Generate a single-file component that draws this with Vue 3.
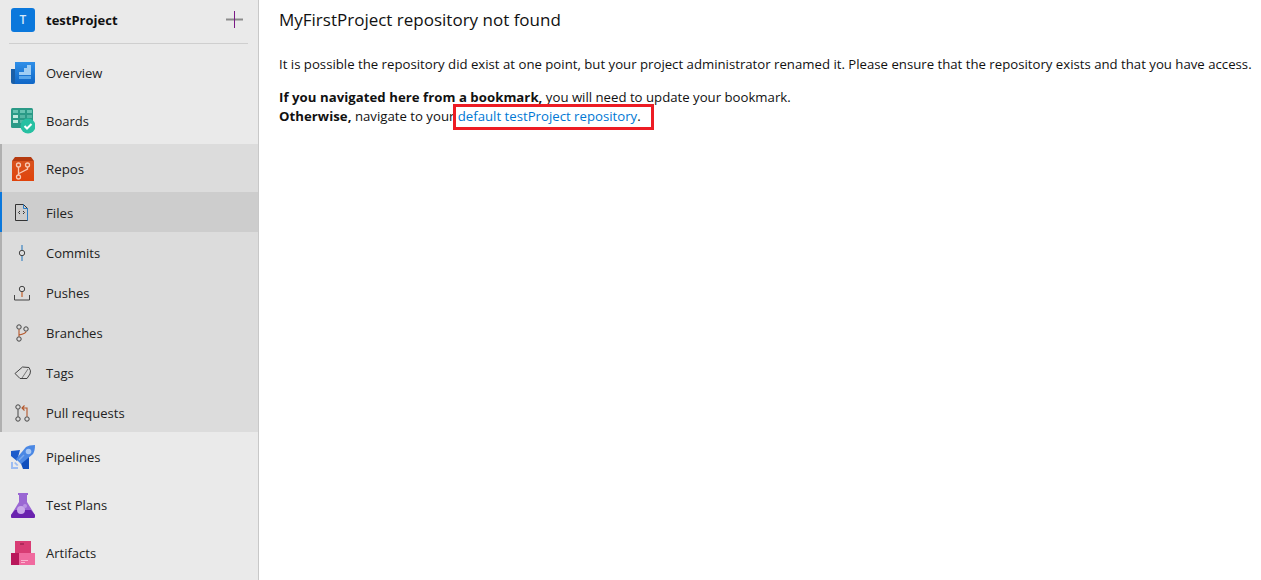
<template>
  <div class="page">
    <aside class="sidebar">
      <div class="project">
        <span class="project__avatar">T</span>
        <span class="project__name">testProject</span>
        <svg class="project__add" width="17" height="17" viewBox="0 0 17 17">
          <path d="M0 8.500h17" stroke="#8c8c8c" stroke-width="2" />
          <path d="M8.500 0v17" stroke="#7a1a86" stroke-width="1" />
        </svg>
      </div>

      <nav class="nav">
        <a class="nav__item">
          <svg class="nav__icon" width="24" height="24" viewBox="0 0 24 24">
            <defs>
              <linearGradient id="overviewFill" x1="0" y1="0" x2="0" y2="1">
                <stop offset="0" stop-color="#2f8fe8" />
                <stop offset="1" stop-color="#0f66c6" />
              </linearGradient>
            </defs>
            <path d="M0 8h5v15H2a2 2 0 0 1-2-2z" fill="#1a5fa8" />
            <path d="M4 1h20v20a2 2 0 0 1-2 2H4z" fill="url(#overviewFill)" />
            <path d="M13 11V7h3V4h4v10H8v-3z" fill="#9fcdf3" />
            <path d="M8 15h12v3H8z" fill="#59a6ea" />
          </svg>
          <span>Overview</span>
        </a>
        <a class="nav__item">
          <svg class="nav__icon" width="24" height="26" viewBox="0 0 24 26">
            <rect x="0" y="0" width="22" height="20" rx="1.500" fill="#2b9a87" />
            <path d="M2 2h5v3H2zM9 2h5v3H9zM16 2h5v3h-5z" fill="#67c4b2" />
            <path d="M2 7h5v3H2zM2 12h5v3H2z" fill="#c4eadf" />
            <path d="M9 7h5v3H9zM16 7h5v3h-5zM9 12h5v3H9z" fill="#54b6a3" />
            <circle cx="17" cy="18" r="7.500" fill="#27c0a2" />
            <path d="M13.500 18l2.500 2.500 4.500-4.500" fill="none" stroke="#fff" stroke-width="2" />
          </svg>
          <span>Boards</span>
        </a>

        <div class="repos">
          <a class="nav__item nav__item--repos">
            <svg class="nav__icon" width="22" height="24" viewBox="0 0 22 24">
              <defs>
                <linearGradient id="reposFill" x1="0" y1="0" x2="0" y2="1">
                  <stop offset="0" stop-color="#d9531e" />
                  <stop offset="1" stop-color="#e0430b" />
                </linearGradient>
              </defs>
              <path d="M0 4h22v20H0z" fill="url(#reposFill)" />
              <path d="M3 0h16l3 4H0z" fill="#b53a0f" />
              <g fill="none" stroke="#f8c9b3" stroke-width="1.300">
                <circle cx="6.500" cy="8" r="2" />
                <circle cx="15.500" cy="8" r="2" />
                <circle cx="6.500" cy="20" r="2" />
                <path d="M6.500 10v8M15.500 10v2L7 16.500" />
              </g>
            </svg>
            <span>Repos</span>
          </a>
          <a class="nav__sub nav__sub--active">
            <svg class="nav__glyph" width="16" height="18" viewBox="0 0 16 18">
              <path d="M2.500.5h8l4 4v12h-12z" fill="none" stroke="#333" stroke-width="1" />
              <path d="M10.500.5v4h4v12" fill="none" stroke="#2a7ec8" stroke-width="1" />
              <path d="M7 7L5.500 8.500 7 10M10 7l1.500 1.500L10 10" fill="none" stroke="#333" stroke-width="1" />
            </svg>
            <span>Files</span>
          </a>
          <a class="nav__sub">
            <svg class="nav__glyph" width="18" height="18" viewBox="0 0 18 18">
              <path d="M9 1v5M9 12v5" stroke="#3f85c2" stroke-width="1.200" />
              <circle cx="9" cy="9" r="2.700" fill="none" stroke="#444" stroke-width="1" />
            </svg>
            <span>Commits</span>
          </a>
          <a class="nav__sub">
            <svg class="nav__glyph" width="18" height="18" viewBox="0 0 18 18">
              <circle cx="9" cy="5" r="2.700" fill="none" stroke="#444" stroke-width="1" />
              <path d="M9 8v5" stroke="#c2602a" stroke-width="1.200" />
              <path d="M1.500 11v5h15v-5" fill="none" stroke="#444" stroke-width="1" />
            </svg>
            <span>Pushes</span>
          </a>
          <a class="nav__sub">
            <svg class="nav__glyph" width="16" height="18" viewBox="0 0 16 18">
              <g fill="none" stroke="#444" stroke-width="1">
                <circle cx="6" cy="3" r="2.200" />
                <circle cx="6" cy="15" r="2.200" />
                <circle cx="13" cy="5" r="2.200" />
              </g>
              <path d="M6 5.500v7M13 7.500q0 2-7 3.500" fill="none" stroke="#b5572a" stroke-width="1.100" />
            </svg>
            <span>Branches</span>
          </a>
          <a class="nav__sub">
            <svg class="nav__glyph" width="20" height="18" viewBox="0 0 20 18">
              <path d="M2 9.500L9.500 3l6.500.5q2.500 3.500 1 6.500l-3 4.500H7z" fill="none" stroke="#444" stroke-width="1" />
              <path d="M9 14l6-9" stroke="#777" stroke-width="1" />
            </svg>
            <span>Tags</span>
          </a>
          <a class="nav__sub">
            <svg class="nav__glyph" width="18" height="18" viewBox="0 0 18 18">
              <g fill="none" stroke="#444" stroke-width="1">
                <circle cx="5" cy="3" r="2.200" />
                <circle cx="5" cy="15" r="2.200" />
                <circle cx="14" cy="15" r="2.200" />
                <path d="M5 5.500v7" />
              </g>
              <path d="M14 12.500V4H9.500M11.500 1.500L9 4l2.500 2.500" fill="none" stroke="#b5572a" stroke-width="1.100" />
            </svg>
            <span>Pull requests</span>
          </a>
        </div>

        <a class="nav__item nav__item--after">
          <svg class="nav__icon" width="24" height="24" viewBox="0 0 24 24">
            <path d="M0 6l9-1-3 11-6-5z" fill="#1d5ccb" />
            <path d="M9 16l9-6v14h-6z" fill="#0f4ebd" />
            <path d="M5 14L15 2q3-2 9-2 0 6-2 9L10 19z" fill="#4b88e4" />
            <circle cx="17.500" cy="6.500" r="2.800" fill="#a8c8f5" />
            <path d="M8 15l5-5" stroke="#7aa8ec" stroke-width="1.500" />
            <path d="M0 17h2v5h5v2H0zM3 18l1.500-1 3 3-1.500 1z" fill="#9cbcf2" />
          </svg>
          <span>Pipelines</span>
        </a>
        <a class="nav__item">
          <svg class="nav__icon" width="24" height="25" viewBox="0 0 24 25">
            <path d="M7 0h10v2h-1v7l8 13a2 2 0 0 1-2 3H2a2 2 0 0 1-2-3l8-13V2H7z" fill="#9a67d3" />
            <path d="M4 17h16l4 5a2 2 0 0 1-2 3H2a2 2 0 0 1-2-3z" fill="#6a22ae" />
            <circle cx="10" cy="17" r="4" fill="#c9a9ea" />
            <circle cx="14" cy="13" r="2" fill="#b993e4" />
          </svg>
          <span>Test Plans</span>
        </a>
        <a class="nav__item">
          <svg class="nav__icon" width="24" height="24" viewBox="0 0 24 24">
            <path d="M4 0h16v12H4z" fill="#d83c74" />
            <path d="M9 2h4v2H9z" fill="#b02a5c" />
            <path d="M0 12h8v12H0z" fill="#b9175a" />
            <path d="M8 12h16v12H8z" fill="#f06a9f" />
            <path d="M10 19h7v1h-7zM10 21h4v1h-4z" fill="#f9b5cf" />
          </svg>
          <span>Artifacts</span>
        </a>
      </nav>
    </aside>

    <main class="content">
      <h1 class="content__title">MyFirstProject repository not found</h1>
      <p class="content__text">
        It is possible the repository did exist at one point, but your project administrator renamed it. Please ensure that the repository exists and that you have access.
      </p>
      <p class="content__text">
        <strong>If you navigated here from a bookmark,</strong> you will need to update your bookmark.<br />
        <strong>Otherwise,</strong> navigate to your
        <span class="callout"><a class="content__link">default testProject repository</a>.</span>
      </p>
    </main>
  </div>
</template>

<script setup>
</script>

<style>
  html,
  body {
    margin: 0;
    background: #fff;
  }
</style>

<style scoped>
  .page {
    display: flex;
    height: 580px;
    overflow: hidden;
    font-family: 'Open Sans', 'Noto Sans', sans-serif;
    font-size: 13px;
    color: #222;
  }

  .sidebar {
    box-sizing: border-box;
    flex: 0 0 259px;
    height: 580px;
    background: #eaeaea;
    border-right: 1px solid #c8c8c8;
  }

  .project {
    display: flex;
    align-items: center;
    box-sizing: border-box;
    height: 44px;
    margin: 0 10px 0 9px;
    padding: 0 5px 4px 2px;
    border-bottom: 1px solid #cfcfcf;
  }

  .project__avatar {
    display: flex;
    align-items: center;
    justify-content: center;
    width: 24px;
    height: 24px;
    border-radius: 3px;
    background: #0b78dc;
    color: #d5e8fa;
    font-size: 12px;
    font-weight: 600;
  }

  .project__name {
    flex: 1;
    margin-left: 11px;
    font-weight: 700;
    color: #111;
  }

  .project__add {
    display: block;
  }

  .nav {
    display: flex;
    flex-direction: column;
    padding-top: 5px;
  }

  .nav__item {
    display: grid;
    grid-template-columns: 35px 1fr;
    align-items: center;
    height: 48px;
    padding-left: 11px;
    flex: none;
  }

  .nav__item--repos {
    box-sizing: border-box;
    grid-template-columns: 34px 1fr;
    padding: 2px 0 0 10px;
    font-weight: 500;
    font-size: 13.300px;
  }

  .nav__item--after {
    margin-top: 1px;
  }

  .repos {
    flex: none;
    margin-top: -1px;
    background: #dcdcdc;
    border-left: 2px solid #b0b0b0;
  }

  .nav__sub {
    display: grid;
    grid-template-columns: 33px 1fr;
    align-items: center;
    box-sizing: border-box;
    height: 40px;
    padding: 2px 0 0 11px;
    margin-left: -2px;
    border-left: 2px solid transparent;
  }

  .nav__sub--active {
    background: #cdcdcd;
    border-left-color: #0b78dc;
    font-weight: 500;
    font-size: 13.300px;
  }

  .nav__icon,
  .nav__glyph {
    display: block;
  }

  .content {
    flex: 1;
    min-width: 0;
    padding: 9px 0 0 20px;
    color: #111;
    font-size: 13.200px;
  }

  .content__title {
    margin: 0 0 25px;
    font-size: 17px;
    line-height: 21px;
    font-weight: 400;
  }

  .content__text {
    margin: 0 0 14px;
    line-height: 19px;
    white-space: nowrap;
  }

  .content__text strong {
    letter-spacing: 0.04px;
  }

  .content__link {
    color: #0078d4;
  }

  .callout {
    position: relative;
  }

  .callout::before {
    content: '';
    position: absolute;
    left: -5px;
    right: -13px;
    top: -3px;
    bottom: -5px;
    border: 3px solid #ed1c24;
    pointer-events: none;
  }
</style>
